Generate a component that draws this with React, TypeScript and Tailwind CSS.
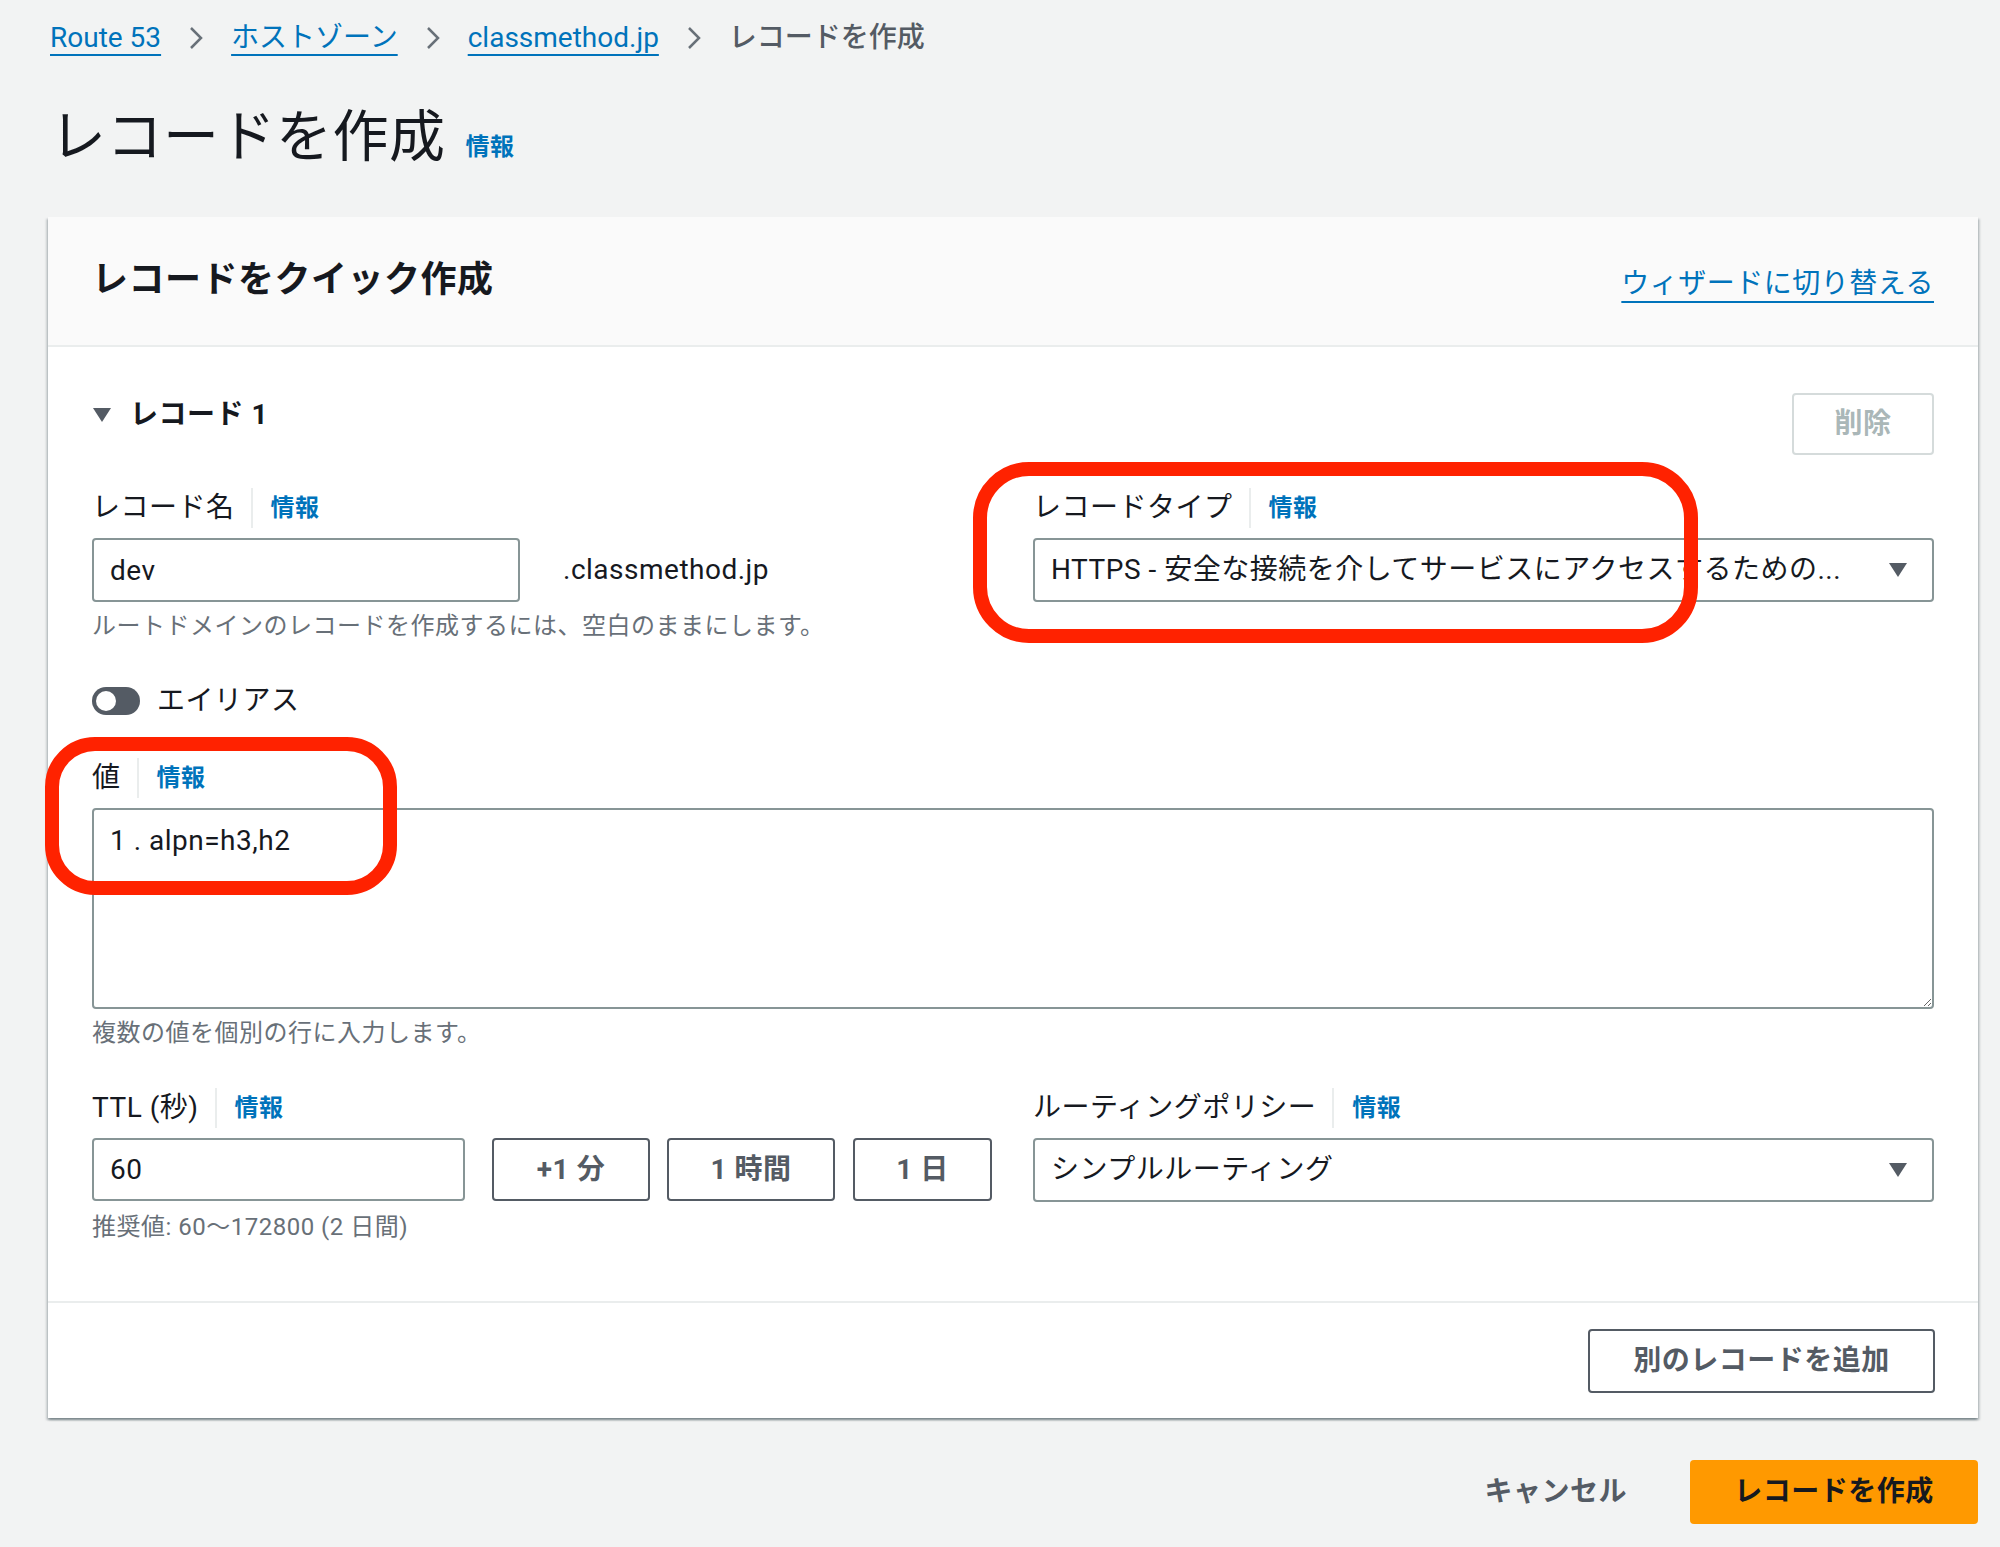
import type { ReactNode } from 'react'

const FONT = "font-['Roboto','Noto_Sans_CJK_JP',sans-serif]"

function Info() {
  return <span className="text-[24px] font-bold text-[#0073bb]">情報</span>
}

function FieldLabel({ children }: { children: ReactNode }) {
  return (
    <div className="flex h-[40px] items-center pt-[3px] text-[28px] text-[#16191f]">
      <span>{children}</span>
      <span className="ml-[16px] flex h-[40px] items-center border-l-2 border-[#eaeded] pl-[18px]">
        <Info />
      </span>
    </div>
  )
}

function Hint({ children }: { children: ReactNode }) {
  return <div className="h-[32px] text-[24px] leading-[32px] text-[#687078]">{children}</div>
}

function Caret() {
  return (
    <svg width="20" height="16" viewBox="0 0 20 16" className="shrink-0">
      <path d="M1 1h18L10 15z" fill="#545b64" />
    </svg>
  )
}

function Select({ value }: { value: string }) {
  return (
    <div className="flex h-[64px] items-center justify-between rounded-[4px] border-2 border-[#879596] bg-white pl-[16px] pr-[24px] text-[28px] text-[#16191f]">
      <span className="whitespace-nowrap">{value}</span>
      <Caret />
    </div>
  )
}

function Chevron() {
  return (
    <svg width="16" height="26" viewBox="0 0 16 26" className="mx-[27px]">
      <path d="M3 3l10 10L3 23" fill="none" stroke="#687078" strokeWidth="2.5" />
    </svg>
  )
}

function Crumb({ children }: { children: ReactNode }) {
  return (
    <a className="text-[#0073bb] underline decoration-2 underline-offset-[7px]">{children}</a>
  )
}

function OutlineButton({ children, className = '' }: { children: ReactNode; className?: string }) {
  return (
    <button
      className={`flex h-[62px] items-center justify-center rounded-[4px] border-2 border-[#545b64] bg-white text-[28px] font-bold text-[#545b64] ${className}`}
    >
      {children}
    </button>
  )
}

export default function App() {
  return (
    <div className={`relative min-h-[1547px] bg-[#f2f3f3] pl-[48px] pr-[22px] pt-[18px] ${FONT} tracking-[0.5px] text-[#16191f]`}>
      {/* breadcrumbs */}
      <nav className="flex h-[40px] items-center pl-[2px] text-[28px] tracking-normal">
        <Crumb>Route 53</Crumb>
        <Chevron />
        <Crumb>ホストゾーン</Crumb>
        <Chevron />
        <Crumb>classmethod.jp</Crumb>
        <Chevron />
        <span className="font-medium text-[#545b64]">レコードを作成</span>
      </nav>

      <div className="mt-[47px] flex h-[64px] items-end pl-[2px]">
        <h1 className="text-[56px] leading-[64px] font-normal text-[#16191f]">レコードを作成</h1>
        <span className="mb-[4px] ml-[20px]">
          <Info />
        </span>
      </div>

      {/* main card */}
      <section className="mt-[48px] bg-white shadow-[0_2px_2px_0_rgba(0,28,36,0.3),2px_2px_2px_0_rgba(0,28,36,0.15),-2px_2px_2px_0_rgba(0,28,36,0.15)]">
        <header className="flex h-[130px] items-center justify-between border-b-2 border-[#eaeded] bg-[#fafafa] px-[44px]">
          <h2 className="mb-[2px] text-[36px] font-bold text-[#16191f]">レコードをクイック作成</h2>
          <a className="mt-[6px] text-[28px] text-[#0073bb] underline decoration-2 underline-offset-[8px]">ウィザードに切り替える</a>
        </header>

        <div className="px-[44px] pt-[46px] pb-[58px]">
          <div className="flex items-start justify-between">
            <div className="flex h-[40px] items-center pt-[4px] text-[28px] font-bold">
              <svg width="20" height="16" viewBox="0 0 20 16" className="mr-[18px]">
                <path d="M1 1h18L10 15z" fill="#545b64" />
              </svg>
              <span>レコード 1</span>
            </div>
            <button className="flex h-[62px] w-[142px] items-center justify-center rounded-[4px] border-2 border-[#d5dbdb] bg-white text-[28px] font-bold text-[#aab7b8]">
              削除
            </button>
          </div>

          <div className="mt-[31px] grid grid-cols-2 gap-x-[40px]">
            <div>
              <FieldLabel>レコード名</FieldLabel>
              <div className="mt-[12px] flex items-center">
                <input
                  readOnly
                  value="dev"
                  className="h-[64px] w-[428px] rounded-[4px] border-2 border-[#879596] bg-white px-[16px] text-[28px] text-[#16191f] outline-none"
                />
                <span className="ml-[43px] text-[28px] text-[#16191f]">.classmethod.jp</span>
              </div>
              <div className="mt-[8px]">
                <Hint>ルートドメインのレコードを作成するには、空白のままにします。</Hint>
              </div>
            </div>
            <div>
              <FieldLabel>レコードタイプ</FieldLabel>
              <div className="mt-[12px]">
                <Select value="HTTPS - 安全な接続を介してサービスにアクセスするための..." />
              </div>
            </div>
          </div>

          <div className="mt-[37px] flex h-[40px] items-center pt-[3px]">
            <span className="relative h-[28px] w-[48px] rounded-full bg-[#545b64]">
              <span className="absolute left-[4px] top-[4px] h-[20px] w-[20px] rounded-full bg-white" />
            </span>
            <span className="ml-[17px] text-[28px] text-[#16191f]">エイリアス</span>
          </div>

          <div className="mt-[37px]">
            <FieldLabel>値</FieldLabel>
            <textarea
              readOnly
              defaultValue="1 . alpn=h3,h2"
              className="mt-[12px] block h-[201px] w-full resize-y rounded-[4px] border-2 border-[#879596] bg-white px-[16px] py-[12px] text-[28px] leading-[38px] text-[#16191f] outline-none"
            />
            <div className="mt-[8px]">
              <Hint>複数の値を個別の行に入力します。</Hint>
            </div>
          </div>

          <div className="mt-[37px] grid grid-cols-2 gap-x-[40px]">
            <div>
              <FieldLabel>TTL (秒)</FieldLabel>
              <div className="mt-[12px] flex items-center">
                <input
                  readOnly
                  value="60"
                  className="h-[63px] w-[373px] rounded-[4px] border-2 border-[#879596] bg-white px-[16px] text-[28px] text-[#16191f] outline-none"
                />
                <OutlineButton className="ml-[27px] w-[158px] h-[63px]">+1 分</OutlineButton>
                <OutlineButton className="ml-[17px] w-[168px] h-[63px]">1 時間</OutlineButton>
                <OutlineButton className="ml-[18px] w-[139px] h-[63px]">1 日</OutlineButton>
              </div>
              <div className="mt-[10px]">
                <Hint>推奨値: 60〜172800 (2 日間)</Hint>
              </div>
            </div>
            <div>
              <FieldLabel>ルーティングポリシー</FieldLabel>
              <div className="mt-[12px]">
                <Select value="シンプルルーティング" />
              </div>
            </div>
          </div>
        </div>

        <footer className="flex justify-end border-t-2 border-[#eaeded] px-[43px] pt-[26px] pb-[25px]">
          <OutlineButton className="h-[64px] w-[347px]">別のレコードを追加</OutlineButton>
        </footer>
      </section>

      <div className="mt-[42px] flex items-center justify-end gap-[63px]">
        <button className="text-[28px] font-bold text-[#545b64]">キャンセル</button>
        <button className="h-[64px] w-[288px] rounded-[4px] bg-[#ff9900] text-[28px] font-bold text-[#16191f]">
          レコードを作成
        </button>
      </div>

      {/* red annotation boxes */}
      <div className="pointer-events-none absolute left-[973px] top-[462px] h-[181px] w-[725px] rounded-[56px] border-[14px] border-[#ff2200]" />
      <div className="pointer-events-none absolute left-[45px] top-[737px] h-[158px] w-[352px] rounded-[50px] border-[14px] border-[#ff2200]" />
    </div>
  )
}
